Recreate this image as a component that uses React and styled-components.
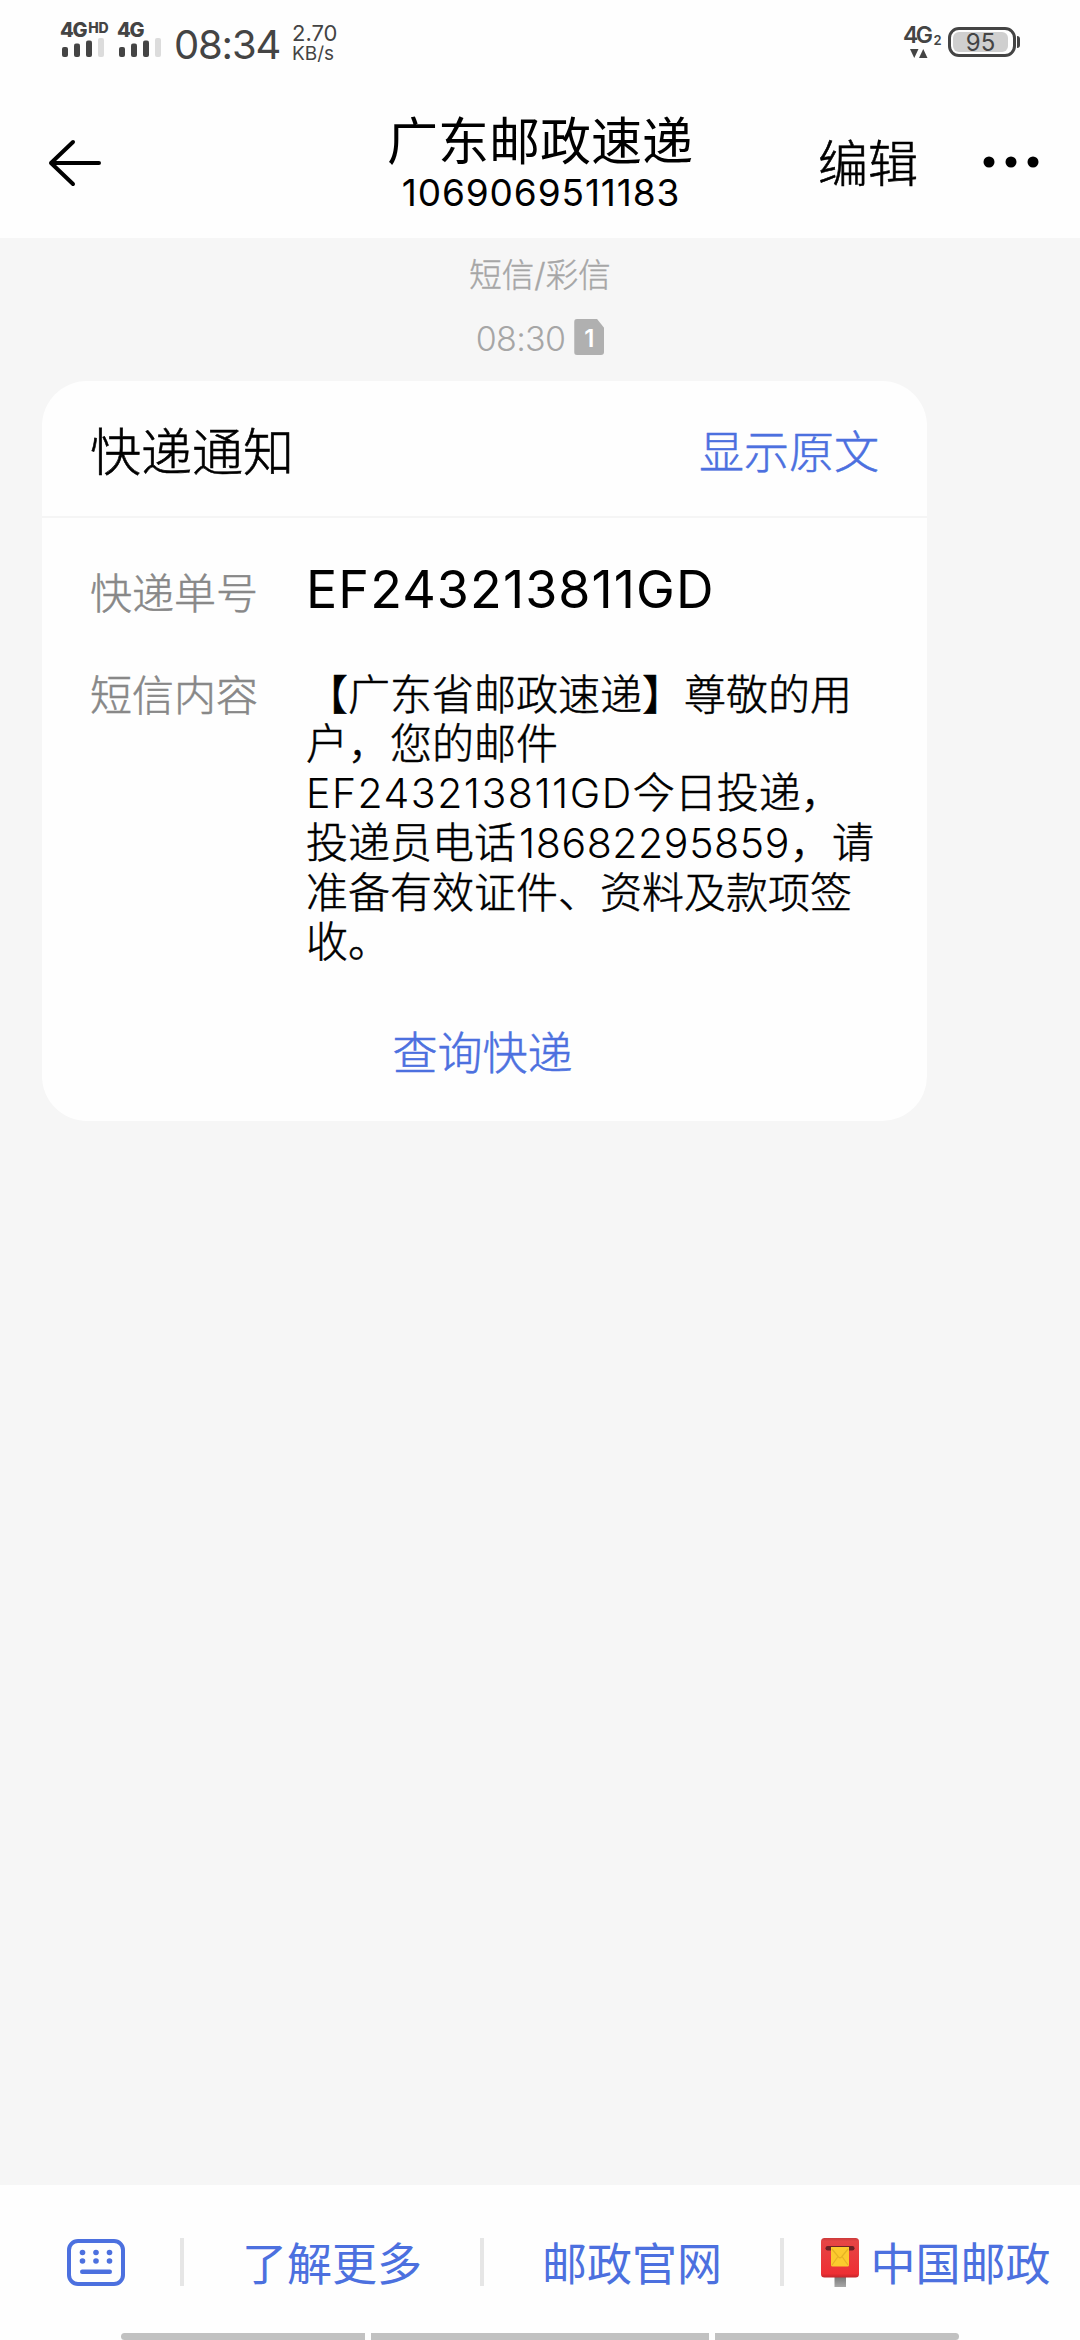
import React from "react";
import styled, { createGlobalStyle } from "styled-components";

// ========================================
// DATA
// ========================================

const message = [
  ["【广东省邮政速递】尊敬的用"],
  ["户，您的邮件"],
  [{ code: "EF243213811GD", spacing: "1.5px" }, "今日投递，"],
  ["投递员电话", { code: "18682295859", spacing: "0.6px", indent: "3px" }, "，请"],
  ["准备有效证件、资料及款项签"],
  ["收。"]
];

// ========================================
// ICONS
// ========================================

const Signal = () => (
  <svg width="44" height="20" viewBox="0 0 44 20">
    <g fill="#444">
      <rect x="0" y="9" width="6" height="10" rx="2" />
      <rect x="12" y="5.500" width="6" height="13.500" rx="2" />
      <rect x="24" y="2.500" width="6" height="16.500" rx="2" />
    </g>
    <rect x="36" y="0" width="6" height="19" rx="2" fill="#dcdcdc" />
  </svg>
);

const BackArrow = () => (
  <svg width="56" height="50" viewBox="0 0 56 50">
    <path
      d="M26 4 L4 25 L26 46 M4 25 H52"
      fill="none"
      stroke="#000"
      strokeWidth="4"
      strokeLinecap="round"
      strokeLinejoin="round"
    />
  </svg>
);

const Dots = () => (
  <svg width="56" height="12" viewBox="0 0 56 12">
    <circle cx="6" cy="6" r="5.500" />
    <circle cx="28" cy="6" r="5.500" />
    <circle cx="50" cy="6" r="5.500" />
  </svg>
);

const Arrows = () => (
  <svg width="18" height="9" viewBox="0 0 18 9" fill="#444">
    <path d="M0 0 H8.500 L4.250 9 Z" />
    <path d="M9 9 H17.500 L13.250 0 Z" />
  </svg>
);

const Keyboard = () => (
  <svg width="58" height="47" viewBox="0 0 58 47" fill="#4c70df">
    <rect
      x="2"
      y="2"
      width="54"
      height="43"
      rx="9"
      fill="none"
      stroke="#4c70df"
      strokeWidth="4"
    />
    {[15.5, 29, 42.5].map(x => (
      <React.Fragment key={x}>
        <circle cx={x} cy="13.500" r="2.800" />
        <circle cx={x} cy="22" r="2.800" />
      </React.Fragment>
    ))}
    <rect x="13" y="30.500" width="32" height="4.500" rx="2.200" />
  </svg>
);

const Mailbox = () => (
  <svg width="38" height="49" viewBox="0 0 38 49">
    <defs>
      <linearGradient id="box" x1="0" y1="0" x2="0" y2="1">
        <stop offset="0" stopColor="#c93a3a" />
        <stop offset="0.08" stopColor="#e64545" />
        <stop offset="0.9" stopColor="#ee2f34" />
        <stop offset="1" stopColor="#c4252a" />
      </linearGradient>
      <linearGradient id="post" x1="0" y1="0" x2="0" y2="1">
        <stop offset="0" stopColor="#757575" />
        <stop offset="1" stopColor="#a8a8a8" />
      </linearGradient>
    </defs>
    <rect x="13.500" y="38" width="11.500" height="11" fill="url(#post)" />
    <rect x="0" y="0" width="38" height="39.500" rx="3.500" fill="url(#box)" />
    <rect x="4.500" y="8" width="29" height="4.500" rx="2.200" fill="#6b2226" />
    <path d="M10 9 H28 V27 Q28 28.500 26.500 28.500 H11.500 Q10 28.500 10 27 Z" fill="#fcca2e" />
    <path
      d="M11 11 L17.500 19 Q19 20.500 20.500 19 L27 11 M11 27 L17 18.500 M27 27 L21 18.500"
      fill="none"
      stroke="#e6b224"
      strokeWidth="1.200"
    />
  </svg>
);

// ========================================
// APP
// ========================================

const App = () => (
  <Screen>
    <GlobalStyle />

    <StatusBar>
      <Network>
        <NetworkLabel>
          4G<sup>HD</sup>
        </NetworkLabel>
        <Signal />
      </Network>
      <Network>
        <NetworkLabel>4G</NetworkLabel>
        <Signal />
      </Network>
      <Clock>08:34</Clock>
      <Speed>
        <span>2.70</span>
        <small>KB/s</small>
      </Speed>
      <DataSim>
        <DataLabel>
          4G<sub>2</sub>
        </DataLabel>
        <Arrows />
      </DataSim>
      <Battery>
        <BatteryShell>
          <BatteryFill>95</BatteryFill>
        </BatteryShell>
        <BatteryNub />
      </Battery>
    </StatusBar>

    <Header>
      <HeaderSide>
        <BackArrow />
      </HeaderSide>
      <Contact>
        <ContactName>广东邮政速递</ContactName>
        <ContactNumber>1069069511183</ContactNumber>
      </Contact>
      <HeaderSide $end>
        <EditButton>编辑</EditButton>
        <Dots />
      </HeaderSide>
    </Header>

    <Thread>
      <Channel>短信/彩信</Channel>
      <Stamp>
        <StampTime>08:30</StampTime>
        <SimBadge>1</SimBadge>
      </Stamp>

      <Card>
        <CardHead>
          <CardTitle>快递通知</CardTitle>
          <CardLink>显示原文</CardLink>
        </CardHead>
        <CardBody>
          <Label>快递单号</Label>
          <OrderNumber>EF243213811GD</OrderNumber>
          <Label>短信内容</Label>
          <Message>
            {message.map((line, i) => (
              <div key={i}>
                {line.map(part =>
                  part.code ? (
                    <Code key={part.code} $spacing={part.spacing} $indent={part.indent}>
                      {part.code}
                    </Code>
                  ) : (
                    part
                  )
                )}
              </div>
            ))}
          </Message>
        </CardBody>
        <CardAction>查询快递</CardAction>
      </Card>
    </Thread>

    <Menu>
      <MenuItem $width="180px" $indent="12px">
        <Keyboard />
      </MenuItem>
      <MenuItem $divided>
        <MenuText>了解更多</MenuText>
      </MenuItem>
      <MenuItem $divided>
        <MenuText>邮政官网</MenuText>
      </MenuItem>
      <MenuItem $divided $indent="8px">
        <Mailbox />
        <MenuText>中国邮政</MenuText>
      </MenuItem>
    </Menu>
    <NavHandles>
      <Handle $width="244px" $radius="4px 0 0 4px" />
      <Handle $width="338px" />
      <Handle $width="244px" $radius="0 4px 4px 0" />
    </NavHandles>
  </Screen>
);

export default App;

// ========================================
// STYLES
// ========================================

const GlobalStyle = createGlobalStyle`
  body {
    margin: 0;
    background: #fff;
  }

  svg {
    display: block;
    flex: none;
  }
`;

const Screen = styled.div`
  display: flex;
  flex-direction: column;
  box-sizing: border-box;
  width: 1080px;
  height: 2340px;
  overflow: hidden;
  background: #fefefe;
  color: #000;
  font-family: Inter, "Noto Sans CJK SC", sans-serif;
  white-space: nowrap;
`;

// Status bar

const StatusBar = styled.div`
  display: flex;
  flex: none;
  box-sizing: border-box;
  height: 86px;
  padding: 20px 60px 0;
  color: #444;
`;

const Network = styled.div`
  width: 57px;

  svg {
    margin: 0 0 0 2px;
  }
`;

const NetworkLabel = styled.div`
  display: flex;
  height: 18px;
  font-size: 20px;
  font-weight: 800;
  line-height: 20px;
  letter-spacing: -1.3px;

  sup {
    margin-left: 2px;
    font-size: 14px;
    line-height: 15px;
    letter-spacing: -0.3px;
  }
`;

const Clock = styled.div`
  width: 118px;
  font-size: 40px;
  line-height: 50px;
  letter-spacing: -1.2px;
`;

const Speed = styled.div`
  display: flex;
  flex: 1;
  flex-direction: column;
  font-size: 22px;
  line-height: 27px;

  small {
    font-size: 19px;
    line-height: 13px;
  }
`;

const DataSim = styled.div`
  display: flex;
  flex-direction: column;
  width: 46px;

  svg {
    margin: 2px 0 0 8px;
  }
`;

const DataLabel = styled.div`
  display: flex;
  align-items: flex-end;
  height: 27px;
  margin-left: 1px;
  font-size: 23px;
  font-weight: 600;
  line-height: 23px;
  letter-spacing: -2.5px;

  sub {
    margin-left: 3px;
    font-size: 13px;
    line-height: 13px;
  }
`;

const Battery = styled.div`
  display: flex;
  align-items: center;
  gap: 1px;
  height: 30px;
  margin-top: 7px;
`;

const BatteryShell = styled.div`
  box-sizing: border-box;
  width: 68px;
  height: 30px;
  padding: 2px;
  border: 3px solid #444;
  border-radius: 11px;
`;

const BatteryFill = styled.div`
  width: 55px;
  height: 20px;
  border-radius: 6px;
  background: #cfcfcf;
  font-size: 24px;
  line-height: 21px;
  text-align: center;
`;

const BatteryNub = styled.div`
  width: 3px;
  height: 12px;
  border-radius: 0 3px 3px 0;
  background: #444;
`;

// Header

const Header = styled.header`
  display: grid;
  flex: none;
  grid-template-columns: 1fr 320px 1fr;
  height: 152px;
`;

const HeaderSide = styled.div`
  display: flex;
  align-items: center;
  justify-content: ${props => (props.$end ? "flex-end" : "flex-start")};
  padding: ${props => (props.$end ? "0 41px 0 0" : "2px 0 0 47px")};
`;

const EditButton = styled.div`
  margin-right: 65px;
  padding-top: 4px;
  font-size: 50px;
  font-weight: 300;
  line-height: 60px;
  -webkit-text-stroke: 0.6px;
`;

const Contact = styled.div`
  padding-top: 26px;
  text-align: center;
`;

const ContactName = styled.div`
  font-size: 51px;
  line-height: 60px;
`;

const ContactNumber = styled.div`
  padding-left: 2px;
  font-size: 37px;
  line-height: 42px;
  letter-spacing: 0.9px;
`;

// Thread

const Thread = styled.main`
  display: flex;
  flex: 1;
  flex-direction: column;
  align-items: center;
  background: #f6f6f6;
`;

const Channel = styled.div`
  margin-top: 14px;
  color: #a6a6a6;
  font-size: 32.500px;
  font-weight: 300;
  line-height: 48px;
  -webkit-text-stroke: 0.4px;
`;

const Stamp = styled.div`
  display: flex;
  align-items: center;
  gap: 9px;
  height: 40px;
  margin-top: 17px;
`;

const StampTime = styled.div`
  padding-top: 3px;
  color: #a6a6a6;
  font-size: 34px;
  font-weight: 300;
  line-height: 40px;
  letter-spacing: -0.7px;
`;

const SimBadge = styled.span`
  width: 30px;
  height: 36px;
  border-radius: 3px;
  background: #b0b0b0;
  clip-path: polygon(0 0, 76% 0, 100% 25%, 100% 100%, 0 100%);
  color: #fff;
  font-size: 24px;
  font-weight: 600;
  line-height: 40px;
  text-align: center;
`;

const Card = styled.section`
  align-self: flex-start;
  width: 885px;
  height: 740px;
  margin: 24px 0 0 42px;
  border-radius: 45px;
  background: #fefefe;
`;

const CardHead = styled.div`
  display: flex;
  align-items: center;
  justify-content: space-between;
  height: 135px;
  padding: 0 48px;
  border-bottom: 2px solid #f5f5f5;
`;

const CardTitle = styled.div`
  font-size: 51px;
  font-weight: 300;
  -webkit-text-stroke: 0.6px;
`;

const CardLink = styled.div`
  padding-top: 2px;
  color: #4c70df;
  font-size: 45px;
  font-weight: 300;
  -webkit-text-stroke: 0.5px;
`;

const CardBody = styled.div`
  display: grid;
  grid-template-columns: 216px 1fr;
  grid-template-rows: 102px auto;
  padding: 50px 0 0 48px;
`;

const Label = styled.div`
  padding-top: 1px;
  color: #888;
  font-size: 42px;
  font-weight: 300;
  line-height: 49px;
  -webkit-text-stroke: 0.5px;
`;

const OrderNumber = styled.div`
  font-size: 52px;
  line-height: 44px;
  letter-spacing: 1.1px;
`;

const Message = styled.div`
  font-size: 42px;
  font-weight: 300;
  line-height: 49px;
  -webkit-text-stroke: 0.5px;
`;

const Code = styled.span`
  margin-left: ${props => props.$indent || "0"};
  font-size: 41px;
  letter-spacing: ${props => props.$spacing};
  -webkit-text-stroke: 0;
`;

const CardAction = styled.div`
  margin-top: 61px;
  padding-right: 4px;
  color: #4c70df;
  font-size: 45px;
  font-weight: 300;
  line-height: 54px;
  text-align: center;
  -webkit-text-stroke: 0.5px;
`;

// Bottom menu

const Menu = styled.nav`
  display: flex;
  flex: none;
  align-items: center;
  height: 148px;
  color: #4c70df;
  font-size: 45px;
`;

const MenuItem = styled.div`
  display: flex;
  align-items: center;
  justify-content: center;
  gap: 11px;
  box-sizing: border-box;
  width: ${props => props.$width || "300px"};
  height: 48px;
  margin-top: 6px;
  padding-left: ${props => props.$indent || "0"};
  border-left: ${props => (props.$divided ? "4px solid #e6e6e6" : "none")};
`;

const MenuText = styled.span`
  padding-bottom: 2px;
`;

const NavHandles = styled.div`
  display: flex;
  flex: none;
  justify-content: center;
  gap: 6px;
  height: 7px;
`;

const Handle = styled.div`
  width: ${props => props.$width};
  border-radius: ${props => props.$radius || "0"};
  background: #c1c1c1;
`;
